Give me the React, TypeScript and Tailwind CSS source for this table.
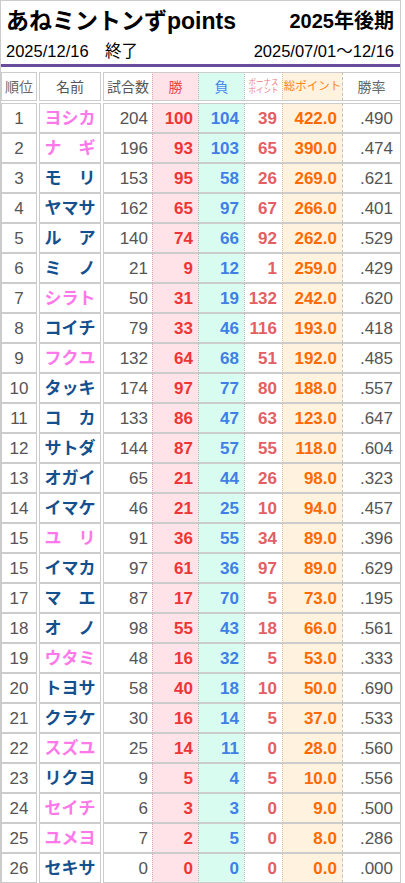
// あねミントンず points ranking table

const FONT = "font-['Liberation_Sans','Noto_Sans_CJK_JP',sans-serif]";

type Row = {
  rank: number;
  name: string;
  games: number;
  win: number;
  lose: number;
  bonus: number;
  total: string;
  rate: string;
  pink: boolean;
};

const ROWS: Row[] = [
  { rank: 1, name: "ヨシカ", games: 204, win: 100, lose: 104, bonus: 39, total: "422.0", rate: ".490", pink: true },
  { rank: 2, name: "ナ　ギ", games: 196, win: 93, lose: 103, bonus: 65, total: "390.0", rate: ".474", pink: true },
  { rank: 3, name: "モ　リ", games: 153, win: 95, lose: 58, bonus: 26, total: "269.0", rate: ".621", pink: false },
  { rank: 4, name: "ヤマサ", games: 162, win: 65, lose: 97, bonus: 67, total: "266.0", rate: ".401", pink: false },
  { rank: 5, name: "ル　ア", games: 140, win: 74, lose: 66, bonus: 92, total: "262.0", rate: ".529", pink: false },
  { rank: 6, name: "ミ　ノ", games: 21, win: 9, lose: 12, bonus: 1, total: "259.0", rate: ".429", pink: false },
  { rank: 7, name: "シラト", games: 50, win: 31, lose: 19, bonus: 132, total: "242.0", rate: ".620", pink: true },
  { rank: 8, name: "コイチ", games: 79, win: 33, lose: 46, bonus: 116, total: "193.0", rate: ".418", pink: false },
  { rank: 9, name: "フクユ", games: 132, win: 64, lose: 68, bonus: 51, total: "192.0", rate: ".485", pink: true },
  { rank: 10, name: "タッキ", games: 174, win: 97, lose: 77, bonus: 80, total: "188.0", rate: ".557", pink: false },
  { rank: 11, name: "コ　カ", games: 133, win: 86, lose: 47, bonus: 63, total: "123.0", rate: ".647", pink: false },
  { rank: 12, name: "サトダ", games: 144, win: 87, lose: 57, bonus: 55, total: "118.0", rate: ".604", pink: false },
  { rank: 13, name: "オガイ", games: 65, win: 21, lose: 44, bonus: 26, total: "98.0", rate: ".323", pink: false },
  { rank: 14, name: "イマケ", games: 46, win: 21, lose: 25, bonus: 10, total: "94.0", rate: ".457", pink: false },
  { rank: 15, name: "ユ　リ", games: 91, win: 36, lose: 55, bonus: 34, total: "89.0", rate: ".396", pink: true },
  { rank: 15, name: "イマカ", games: 97, win: 61, lose: 36, bonus: 97, total: "89.0", rate: ".629", pink: false },
  { rank: 17, name: "マ　エ", games: 87, win: 17, lose: 70, bonus: 5, total: "73.0", rate: ".195", pink: false },
  { rank: 18, name: "オ　ノ", games: 98, win: 55, lose: 43, bonus: 18, total: "66.0", rate: ".561", pink: false },
  { rank: 19, name: "ウタミ", games: 48, win: 16, lose: 32, bonus: 5, total: "53.0", rate: ".333", pink: true },
  { rank: 20, name: "トヨサ", games: 58, win: 40, lose: 18, bonus: 10, total: "50.0", rate: ".690", pink: false },
  { rank: 21, name: "クラケ", games: 30, win: 16, lose: 14, bonus: 5, total: "37.0", rate: ".533", pink: false },
  { rank: 22, name: "スズユ", games: 25, win: 14, lose: 11, bonus: 0, total: "28.0", rate: ".560", pink: true },
  { rank: 23, name: "リクヨ", games: 9, win: 5, lose: 4, bonus: 5, total: "10.0", rate: ".556", pink: false },
  { rank: 24, name: "セイチ", games: 6, win: 3, lose: 3, bonus: 0, total: "9.0", rate: ".500", pink: true },
  { rank: 25, name: "ユメヨ", games: 7, win: 2, lose: 5, bonus: 0, total: "8.0", rate: ".286", pink: true },
  { rank: 26, name: "セキサ", games: 0, win: 0, lose: 0, bonus: 0, total: "0.0", rate: ".000", pink: false },
];

// column cells (shared by header + body)
const C_RANK = "w-[36px] mr-[2px] border border-[#ccc] justify-center";
const C_NAME = "w-[62px] mr-[2px] border border-[#ccc] justify-center";
const C_GAMES = "w-[49px] border-y border-l border-[#ccc]";
const C_WIN = "w-[46px] bg-[#ffe3e8] border-y border-l border-[#ccc] [border-left-style:dotted] [border-left-color:#d9a9b1]";
const C_LOSE = "w-[46px] bg-[#d9fcf1] border-y border-l border-[#ccc] [border-left-style:dotted] [border-left-color:#b5b5b5]";
const C_BONUS = "w-[38px] bg-white border-y border-l border-[#ccc] [border-left-style:dotted] [border-left-color:#b5b5b5]";
const C_TOTAL = "w-[61px] bg-[#fff2de] border-y border-x border-[#ccc] [border-left-style:dotted] [border-left-color:#d8c0a0] [border-right-style:dashed] [border-right-color:#c0c0c0]";
const C_RATE = "w-[57px] border-y border-[#ccc]";

export default function App() {
  return (
    <div className={`w-[401px] border border-[#ccc] bg-white ${FONT}`}>
      {/* Title block */}
      <div className="pl-[5px] pr-[6px]">
        <div className="flex h-[40px] items-center justify-between text-black">
          <h1 className="text-[23px] font-bold leading-none">あねミントンずpoints</h1>
          <span className="text-[20px] font-bold leading-none">2025年後期</span>
        </div>
        <div className="flex h-[23px] items-start justify-between text-[16.5px] leading-[20px] text-black">
          <span>2025/12/16　終了</span>
          <span>2025/07/01～12/16</span>
        </div>
      </div>
      <div className="h-[3px] bg-[#6a4c9c]" />

      {/* Table header */}
      <div className="mt-[5px] flex h-[29px] text-[14px] leading-none">
        <div className={`${C_RANK} flex items-center text-[#666]`}>順位</div>
        <div className={`${C_NAME} flex items-center text-[#555]`}>名前</div>
        <div className={`${C_GAMES} flex items-center justify-center text-[#555]`}>試合数</div>
        <div className={`${C_WIN} flex items-center justify-center text-[#e84848]`}>勝</div>
        <div className={`${C_LOSE} flex items-center justify-center text-[#4a88ea]`}>負</div>
        <div className={`${C_BONUS} flex flex-col items-center justify-center text-[7.5px] leading-[8px] text-[#ea7c7c]`}>
          <span>ボーナス</span>
          <span>ポイント</span>
        </div>
        <div className={`${C_TOTAL} flex items-center justify-center whitespace-nowrap text-[11.5px] text-[#ff8418]`}>
          総ポイント
        </div>
        <div className={`${C_RATE} flex items-center justify-center text-[#666]`}>勝率</div>
      </div>

      {/* Body */}
      <div className="mt-[2px] flex flex-col">
        {ROWS.map((r, i) => (
          <div key={i} className="flex h-[30px] text-[17px] leading-none">
            <div className={`${C_RANK} flex items-center text-[#555]`}>{r.rank}</div>
            <div
              className={`${C_NAME} flex items-center font-bold ${r.pink ? "text-[#ff78ea]" : "text-[#15508e]"}`}
            >
              {r.name}
            </div>
            <div className={`${C_GAMES} flex items-center justify-end pr-[4px] text-[#555]`}>{r.games}</div>
            <div className={`${C_WIN} flex items-center justify-end pr-[5px] font-bold text-[#ee3535]`}>{r.win}</div>
            <div className={`${C_LOSE} flex items-center justify-end pr-[5px] font-bold text-[#3f7fe6]`}>{r.lose}</div>
            <div className={`${C_BONUS} flex items-center justify-end pr-[5px] font-bold text-[#e26064]`}>{r.bonus}</div>
            <div className={`${C_TOTAL} flex items-center justify-end pr-[5px] font-bold text-[#ff6a00]`}>{r.total}</div>
            <div className={`${C_RATE} flex items-center justify-end pr-[7px] text-[#555]`}>{r.rate}</div>
          </div>
        ))}
      </div>
    </div>
  );
}
